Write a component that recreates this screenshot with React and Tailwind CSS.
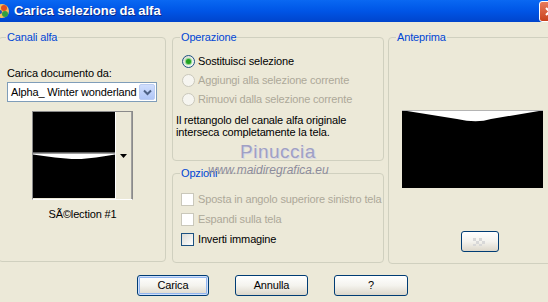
import React from "react";

function Group({ label, className = "", children }) {
  return (
    <div className={`relative border border-[#d0d0bf] rounded-[4px] ${className}`}>
      <span className="absolute top-[-7px] left-[7px] px-[1px] bg-[#ece9d8] text-[#0046d5] leading-[13px] whitespace-nowrap">
        {label}
      </span>
      {children}
    </div>
  );
}

function Radio({ checked, disabled, label }) {
  return (
    <div className="flex items-center h-[19px] gap-[3px] pl-[9px]">
      <div
        className={`w-[13px] h-[13px] rounded-full border flex items-center justify-center ${
          disabled
            ? "border-[#cac8bb] bg-[#f6f5f0]"
            : "border-[#1c5180] bg-linear-to-br from-[#dcdad0] to-white"
        }`}
      >
        {checked && (
          <div className="w-[5px] h-[5px] rounded-full bg-[#21a121] shadow-[0_0_1px_1px_#7fd47f]" />
        )}
      </div>
      <span className={`whitespace-nowrap ${disabled ? "text-[#aca899]" : "text-black"}`}>{label}</span>
    </div>
  );
}

function Check({ disabled, label }) {
  return (
    <div className="flex items-center h-[20px] gap-[4px] pl-[8px]">
      <div
        className={`w-[13px] h-[13px] border ${
          disabled
            ? "border-[#cac8bb] bg-white"
            : "border-[#1c5180] bg-linear-to-br from-[#dcdcd6] to-white"
        }`}
      />
      <span className={`whitespace-nowrap ${disabled ? "text-[#aca899]" : "text-black"}`}>{label}</span>
    </div>
  );
}

function XPButton({ children, className = "", def }) {
  return (
    <div
      className={`h-[21px] rounded-[3px] border border-[#003c74] bg-linear-to-b from-white via-[#f4f3ee] to-[#dcd7ca] flex items-center justify-center ${
        def ? "shadow-[inset_0_0_0_1px_#cfe0fb,inset_0_0_0_2px_#93b6ef]" : ""
      } ${className}`}
    >
      {children}
    </div>
  );
}

export default function App() {
  return (
    <div className="relative w-[548px] h-[302px] overflow-hidden bg-[#ece9d8] text-black text-[11px] leading-[13px] tracking-[-0.15px] font-['Liberation_Sans',Arial,sans-serif]">
      {/* Title bar */}
      <div className="h-[22px] flex items-center bg-linear-to-b from-[#0a68f2] via-[#0055e6] to-[#0044cc]">
        <svg className="ml-[-6px] w-[16px] h-[16px] shrink-0" viewBox="0 0 16 16">
          <circle cx="8" cy="8" r="7" fill="#f0c060" />
          <circle cx="10" cy="5" r="3" fill="#e05020" />
          <circle cx="11" cy="11" r="3" fill="#30a040" />
          <circle cx="6" cy="9" r="2" fill="#2050c0" />
        </svg>
        <span className="ml-[4px] text-white font-bold text-[13px] leading-[16px] tracking-normal [text-shadow:1px_1px_0_#0a2a8a]">
          Carica selezione da alfa
        </span>
        <div className="ml-auto mr-[-12px] w-[21px] h-[21px] rounded-[3px] border border-white bg-linear-to-b from-[#e87a5a] to-[#c8401c] flex items-center justify-center">
          <svg width="11" height="11" viewBox="0 0 11 11">
            <path d="M2 2 L9 9 M9 2 L2 9" stroke="white" strokeWidth="2" />
          </svg>
        </div>
      </div>

      {/* Groups */}
      <div className="flex items-start pt-[15px] ml-[-2px]">
        <Group label="Canali alfa" className="w-[168px] h-[225px] shrink-0">
          <div className="pt-[29px] pl-[8px] flex flex-col">
            <span className="whitespace-nowrap">Carica documento da:</span>
            <div className="mt-[2px] w-[150px] h-[20px] border border-[#7f9db9] bg-white flex items-center">
              <span className="pl-[3px] whitespace-nowrap text-[11px]">Alpha_ Winter wonderland</span>
              <div className="ml-auto mr-[1px] w-[16px] h-[16px] rounded-[2px] border border-[#bccdf2] bg-linear-to-b from-[#d0defd] to-[#b0c6f6] flex items-center justify-center">
                <svg width="9" height="7" viewBox="0 0 9 7">
                  <path d="M1 1.5 L4.5 5 L8 1.5" stroke="#4d6185" strokeWidth="2" fill="none" />
                </svg>
              </div>
            </div>
            <div className="ml-[25px] mt-[9px] w-[101px] flex flex-col items-center">
              <div className="w-[101px] h-[89px] border border-[#8a8a8a] border-b-white flex">
                <svg width="82" height="86" viewBox="0 0 82 86" className="shrink-0">
                  <rect width="82" height="86" fill="black" />
                  <path d="M0 41.5 H82 V42.5 C70 44.5 56 47 44 47 C30 47 14 44.5 0 42.5 Z" fill="white" />
                  <line x1="0" y1="41" x2="82" y2="41" stroke="#b8b8b8" strokeWidth="1" />
                </svg>
                <div className="flex-1 bg-[#ece9d8] border-l border-white border-r border-r-[#a0a0a0] flex items-center justify-center">
                  <svg width="7" height="4" viewBox="0 0 7 4">
                    <path d="M0 0 H7 L3.5 4 Z" fill="black" />
                  </svg>
                </div>
              </div>
              <span className="mt-[8px] whitespace-nowrap">SÃ©lection #1</span>
            </div>
          </div>
        </Group>

        <div className="ml-[6px] w-[212px] shrink-0 flex flex-col">
          <Group label="Operazione" className="h-[124px]">
            <div className="pt-[14px] flex flex-col">
              <Radio checked label="Sostituisci selezione" />
              <Radio disabled label="Aggiungi alla selezione corrente" />
              <Radio disabled label="Rimuovi dalla selezione corrente" />
              <div className="pl-[3px] mt-[5px] leading-[12px]">
                Il rettangolo del canale alfa originale
                <br />
                interseca completamente la tela.
              </div>
            </div>
          </Group>
          <Group label="Opzioni" className="mt-[12px] h-[90px]">
            <div className="pt-[15px] flex flex-col">
              <Check disabled label="Sposta in angolo superiore sinistro tela" />
              <Check disabled label="Espandi sulla tela" />
              <Check label="Inverti immagine" />
            </div>
          </Group>
        </div>

        <Group label="Anteprima" className="ml-[4px] w-[170px] h-[227px] shrink-0">
          <div className="flex flex-col">
            <svg width="141" height="78" viewBox="0 0 141 78" className="ml-[13px] mt-[72px]">
              <rect width="141" height="78" fill="black" />
              <path d="M5 1 L55 9 Q75 13.5 89 9 L137 1 Z" fill="white" />
              <line x1="0" y1="0.5" x2="141" y2="0.5" stroke="#b4b4b4" strokeWidth="1" />
            </svg>
            <XPButton className="ml-[72px] mt-[43px] w-[38px] h-[20px]">
              <svg width="14" height="8" viewBox="0 0 14 8">
                <rect x="0" y="0" width="3" height="3" fill="#d8d8d8" />
                <rect x="6" y="0" width="3" height="3" fill="#d8d8d8" />
                <rect x="3" y="3" width="3" height="3" fill="#d8d8d8" />
                <rect x="9" y="3" width="3" height="3" fill="#d8d8d8" />
                <rect x="0" y="6" width="3" height="2" fill="#d8d8d8" />
                <rect x="6" y="6" width="3" height="2" fill="#d8d8d8" />
              </svg>
            </XPButton>
          </div>
        </Group>
      </div>

      {/* Bottom buttons */}
      <div className="flex pl-[137px] mt-[11px]">
        <XPButton def className="w-[72px]">Carica</XPButton>
        <XPButton className="ml-[26px] w-[73px]">Annulla</XPButton>
        <XPButton className="ml-[26px] w-[74px]">?</XPButton>
      </div>

      {/* Watermark */}
      <span className="absolute left-[240px] top-[141px] text-[19px] leading-[22px] text-[#a0a0c4] tracking-[0.5px] [text-shadow:1px_1px_0_#d8d8e6]">
        Pinuccia
      </span>
      <span className="absolute left-[208px] top-[163px] text-[12px] leading-[14px] italic tracking-normal text-[#8c8c9c]">
        www.maidiregrafica.eu
      </span>
    </div>
  );
}
